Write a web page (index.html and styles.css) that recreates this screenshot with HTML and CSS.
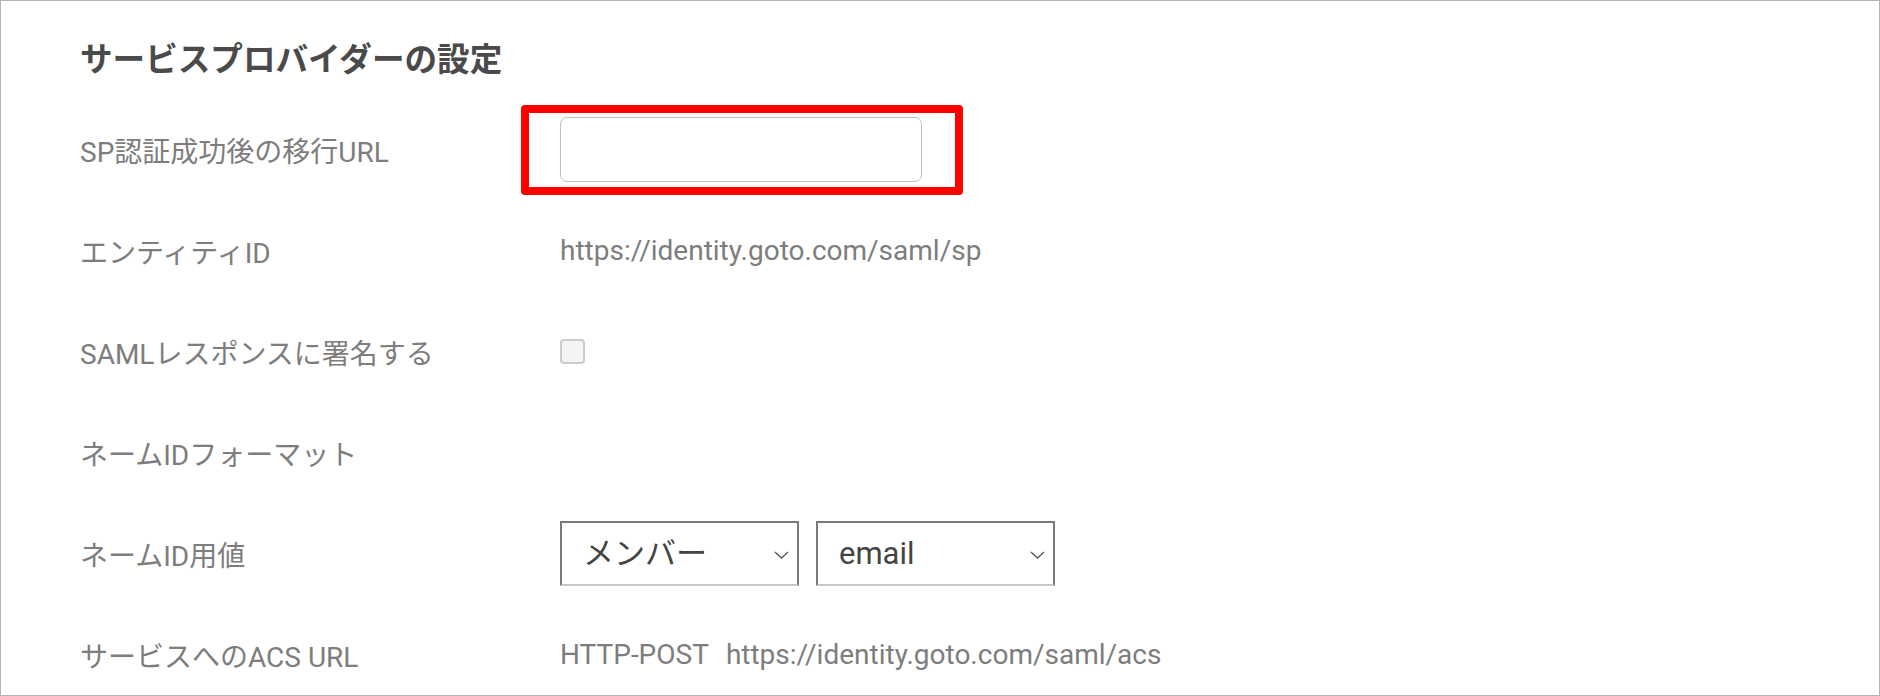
FILE: index.html
```html
<!DOCTYPE html>
<html lang="ja">
<head>
    <meta charset="UTF-8">
    <meta name="viewport" content="width=device-width, initial-scale=1.0">
    <title>サービスプロバイダーの設定</title>
    <link rel="stylesheet" href="styles.css">
</head>
<body>
    <div class="panel">
        <h2 class="panel-title">サービスプロバイダーの設定</h2>

        <div class="form">
            <!-- 移行URL -->
            <label class="form-label" for="relay">SP認証成功後の移行URL</label>
            <div class="form-value">
                <span class="field">
                    <input type="text" id="relay" class="text-input">
                    <span class="highlight"></span>
                </span>
            </div>

            <!-- エンティティID -->
            <div class="form-label">エンティティID</div>
            <div class="form-value">https://identity.goto.com/saml/sp</div>

            <!-- 署名 -->
            <label class="form-label" for="sign">SAMLレスポンスに署名する</label>
            <div class="form-value">
                <input type="checkbox" id="sign" class="check">
            </div>

            <!-- フォーマット -->
            <div class="form-label">ネームIDフォーマット</div>
            <div class="form-value"></div>

            <!-- ネームID用値 -->
            <div class="form-label">ネームID用値</div>
            <div class="form-value selects">
                <span class="select-wrap">
                    <select class="select">
                        <option selected>メンバー</option>
                    </select>
                    <svg class="chevron" width="15" height="8" viewBox="0 0 15 8"><path d="M1 1l6.5 6L14 1" fill="none" stroke="#555" stroke-width="1.3"/></svg>
                </span>
                <span class="select-wrap">
                    <select class="select">
                        <option selected>email</option>
                    </select>
                    <svg class="chevron" width="15" height="8" viewBox="0 0 15 8"><path d="M1 1l6.5 6L14 1" fill="none" stroke="#555" stroke-width="1.3"/></svg>
                </span>
            </div>

            <!-- ACS URL -->
            <div class="form-label">サービスへのACS URL</div>
            <div class="form-value"><span class="method">HTTP-POST</span>https://identity.goto.com/saml/acs</div>
        </div>
    </div>
</body>
</html>
```

FILE: styles.css
```css
/* Geral */
body {
    margin: 0;
    background-color: #ffffff;
    font-family: Roboto, "Noto Sans CJK JP", sans-serif;
}

/* Moldura */
.panel {
    box-sizing: border-box;
    height: 696px;
    border: 1px solid #b4b4b4;
    padding: 38px 0 0 79px;
    overflow: hidden;
}

.panel-title {
    margin: 0;
    font-size: 32.6px;
    line-height: 42px;
    font-weight: 700;
    color: #4a4a4a;
}

/* Linhas do formulário */
.form {
    display: grid;
    grid-template-columns: 480px 1fr;
    grid-auto-rows: 101px;
    align-items: center;
    margin-top: 18px;
}

.form-label,
.form-value {
    font-size: 28px;
    color: #7d7d7d;
    white-space: nowrap;
}

.form-value {
    display: flex;
    align-items: center;
}

.method {
    margin-right: 17px;
}

/* Campo de texto */
.field {
    position: relative;
    display: inline-block;
}

.text-input {
    display: block;
    box-sizing: border-box;
    width: 362px;
    height: 65px;
    border: 1px solid #c0c0c0;
    border-radius: 7px;
    font-size: 28px;
    padding: 0 12px;
    outline: none;
}

.highlight {
    position: absolute;
    left: -39px;
    top: -12px;
    width: 442px;
    height: 90px;
    box-sizing: border-box;
    border: 8px solid #ff0000;
    border-radius: 4px;
    pointer-events: none;
}

/* Checkbox */
.check {
    appearance: none;
    margin: 0;
    width: 25px;
    height: 25px;
    box-sizing: border-box;
    border: 2px solid #cccccc;
    border-radius: 4px;
    background-color: #f4f4f4;
}

/* Seleção */
.selects {
    gap: 17px;
}

.select-wrap {
    position: relative;
    display: inline-block;
}

.select {
    appearance: none;
    display: block;
    box-sizing: border-box;
    width: 239px;
    height: 65px;
    margin: 0;
    padding: 0 0 0 21px;
    border: 2px solid #7a7a7a;
    border-bottom-color: #c8c8c8;
    border-radius: 0;
    background-color: #ffffff;
    font-family: Roboto, "Noto Sans CJK JP", sans-serif;
    font-size: 31px;
    color: #444444;
}

.chevron {
    position: absolute;
    right: 10px;
    top: 30px;
    pointer-events: none;
}
```
